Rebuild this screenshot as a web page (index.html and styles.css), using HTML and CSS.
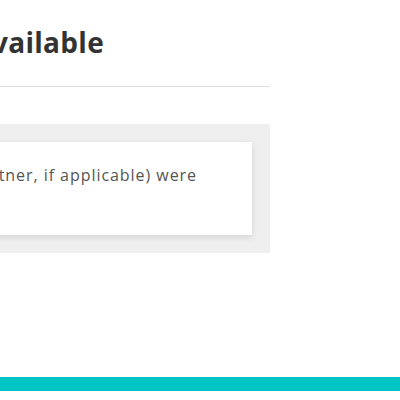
FILE: index.html
```html
<!DOCTYPE html>
<html lang="en">
<head>
<meta charset="utf-8">
<link rel="stylesheet" href="styles.css">
</head>
<body>
<div class="page">
  <main class="content">
    <h1 class="title">Information not available</h1>
    <hr class="rule">
    <section class="notice">
      <div class="card">
        <p class="card-text">We could not confirm that you (and your partner, if applicable) were</p>
      </div>
    </section>
  </main>
  <footer class="footer-bar"></footer>
</div>
</body>
</html>
```
FILE: styles.css
```css
html, body {
  margin: 0;
  padding: 0;
  background: #fff;
  overflow: hidden;
}
body {
  width: 400px;
  height: 400px;
  font-family: "Open Sans", "Noto Sans", sans-serif;
  color: #333;
}
.page {
  display: flex;
  flex-direction: column;
  height: 400px;
}
.content {
  width: 900px;
  margin-left: -630px;
  flex: 1;
}
.title {
  margin: 22px 0 0;
  font-size: 28px;
  line-height: 40px;
  font-weight: 700;
  color: #333;
  white-space: nowrap;
  text-align: right;
  padding-right: 166px;
  letter-spacing: 0.3px;
}
.rule {
  margin: 24px 0 0;
  border: 0;
  border-top: 1px solid #ddd;
  height: 0;
}
.notice {
  margin-top: 37px;
  background: #efefef;
  padding: 18px;
}
.card {
  background: #fff;
  box-shadow: 0 2px 6px rgba(0,0,0,0.12);
  padding: 22px 24px 40px;
  height: 93px;
  box-sizing: border-box;
}
.card-text {
  margin: 0;
  font-size: 16px;
  line-height: 22px;
  letter-spacing: 0.95px;
  color: #555;
  white-space: nowrap;
  text-align: right;
  padding-right: 31px;
}
.footer-bar {
  height: 14px;
  background: #00c5c5;
  margin-bottom: 9px;
}
```
